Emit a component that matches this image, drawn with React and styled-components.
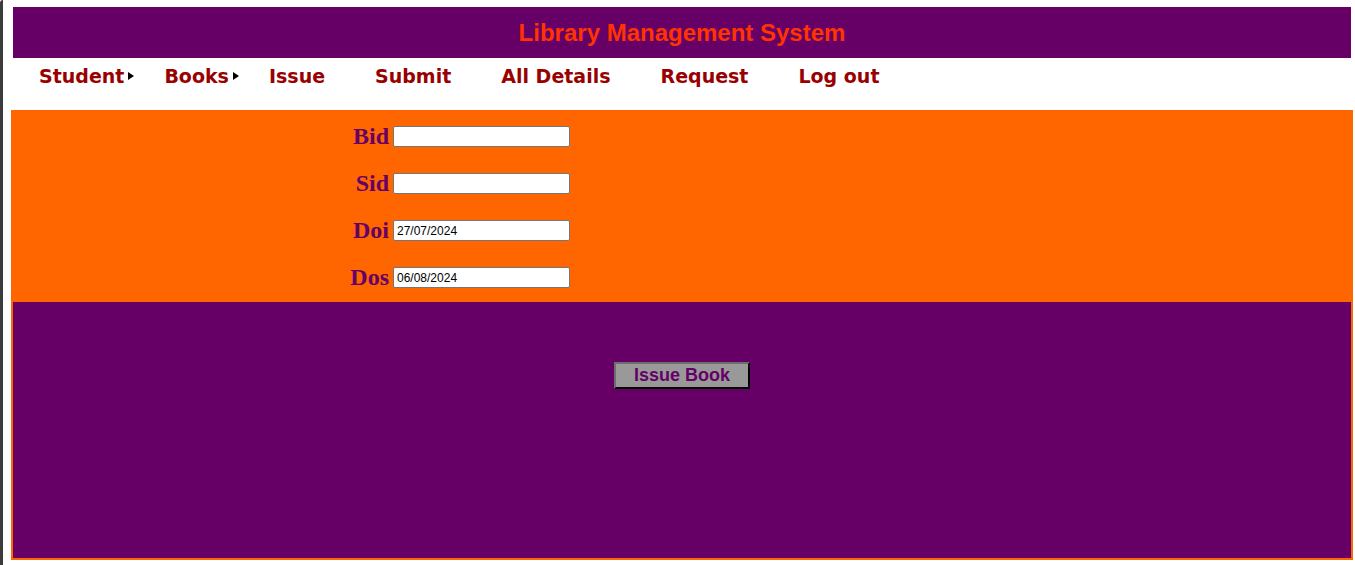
import React from "react";
import styled, { createGlobalStyle } from "styled-components";

const GlobalStyle = createGlobalStyle`
  html, body {
    margin: 0;
    background: #ffffff;
  }
  body {
    padding: 7px 2px 0 11px;
  }
  body::before {
    content: "";
    position: fixed;
    left: 0;
    top: 0;
    width: 3px;
    height: 100%;
    background: #3b3b3b;
    border-top-left-radius: 4px;
  }
`;

const Page = styled.div`
  display: flex;
  flex-direction: column;
`;

const Header = styled.header`
  margin: 0 2px;
  height: 51px;
  background: #660066;
  display: flex;
  align-items: center;
  justify-content: center;
`;

const Title = styled.h1`
  margin: 0;
  font-family: "Liberation Sans", Arial, sans-serif;
  font-size: 24px;
  font-weight: bold;
  color: #ff3300;
`;

const Nav = styled.ul`
  list-style: none;
  margin: 0 2px;
  padding: 5px 0 0 1px;
  height: 47px;
  display: flex;
  align-items: flex-start;
`;

const NavItem = styled.li`
  padding: 0 ${(p) => (p.$sub ? "5px" : "25px")} 0 25px;
  font-family: "DejaVu Sans", Verdana, sans-serif;
  font-size: 19px;
  font-weight: bold;
  line-height: 26px;
  color: #990000;
  display: flex;
  align-items: center;
  white-space: nowrap;
`;

const Arrow = styled.span`
  margin-left: 4px;
  width: 0;
  height: 0;
  border-top: 4px solid transparent;
  border-bottom: 4px solid transparent;
  border-left: 6px solid #000000;
`;

const Main = styled.div`
  background: #ff6600;
  padding: 0 2px 2px 2px;
  display: flex;
  flex-direction: column;
`;

const Form = styled.div`
  display: grid;
  grid-template-columns: 376px 177px;
  column-gap: 4px;
  row-gap: 26px;
  padding: 16px 0 14px 0;
  align-items: center;
`;

const Label = styled.label`
  text-align: right;
  font-family: "Liberation Serif", "Times New Roman", serif;
  font-size: 24px;
  font-weight: bold;
  line-height: 21px;
  color: #660066;
`;

const Input = styled.input`
  box-sizing: border-box;
  width: 177px;
  height: 21px;
  margin: 0;
  padding: 1px 3px;
  border: 1px solid #767676;
  border-radius: 2px;
  background: #ffffff;
  font-family: "Liberation Sans", Arial, sans-serif;
  font-size: 12px;
  color: #000000;
  outline: none;
`;

const Panel = styled.section`
  height: 256px;
  background: #660066;
  display: flex;
  justify-content: center;
  align-items: flex-start;
  padding-top: 60px;
  box-sizing: border-box;
`;

const Button = styled.button`
  width: 136px;
  height: 27px;
  margin: 0;
  padding: 0;
  background: #999999;
  border: 2px solid;
  border-color: #6e6e6e #000000 #000000 #6e6e6e;
  font-family: "Liberation Sans", Arial, sans-serif;
  font-size: 18px;
  font-weight: bold;
  color: #660066;
`;

const menu = [
  { label: "Student", sub: true },
  { label: "Books", sub: true },
  { label: "Issue" },
  { label: "Submit" },
  { label: "All Details" },
  { label: "Request" },
  { label: "Log out" },
];

const fields = [
  { label: "Bid", value: "" },
  { label: "Sid", value: "" },
  { label: "Doi", value: "27/07/2024" },
  { label: "Dos", value: "06/08/2024" },
];

export default function App() {
  return (
    <Page>
      <GlobalStyle />
      <Header>
        <Title>Library Management System</Title>
      </Header>
      <Nav>
        {menu.map((m) => (
          <NavItem key={m.label} $sub={m.sub}>
            {m.label}
            {m.sub && <Arrow />}
          </NavItem>
        ))}
      </Nav>
      <Main>
        <Form>
          {fields.map((f) => (
            <React.Fragment key={f.label}>
              <Label>{f.label}</Label>
              <Input type="text" defaultValue={f.value} />
            </React.Fragment>
          ))}
        </Form>
        <Panel>
          <Button>Issue Book</Button>
        </Panel>
      </Main>
    </Page>
  );
}
